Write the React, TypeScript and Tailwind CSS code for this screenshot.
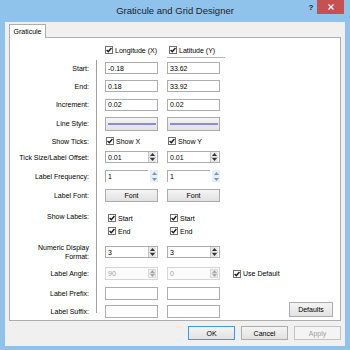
import React from "react";

function CheckMark() {
  return (
    <svg width="6" height="6" viewBox="0 0 6 6">
      <path d="M0.6 3.1 L2.3 4.8 L5.4 1" stroke="#1a1a1a" strokeWidth="1.4" fill="none" />
    </svg>
  );
}

function Check({ label }: { label: string }) {
  return (
    <div className="flex items-center gap-[2px] leading-none">
      <div className="flex h-[8px] w-[8px] items-center justify-center border border-[#707070] bg-white">
        <CheckMark />
      </div>
      <span>{label}</span>
    </div>
  );
}

function TextBox({ value = "", tall = false }: { value?: string; tall?: boolean }) {
  return (
    <div
      className={
        tall
          ? "flex h-[13px] w-[53px] items-center border border-[#abadb3] bg-white pl-[2px] leading-none"
          : "flex h-[12px] w-[53px] items-center border border-[#abadb3] bg-white pl-[2px] leading-none"
      }
    >
      {value}
    </div>
  );
}

function Tri({ up, color }: { up: boolean; color: string }) {
  return (
    <svg width="5" height="3" viewBox="0 0 5 3">
      <path d={up ? "M0 3 L2.5 0 L5 3Z" : "M0 0 L2.5 3 L5 0Z"} fill={color} />
    </svg>
  );
}

function Spin({ value, variant = "normal" }: { value: string; variant?: "normal" | "blue" | "disabled" }) {
  if (variant === "disabled") {
    return (
      <div className="flex h-[13px] w-[53px] border border-[#d6d6d6] bg-[#fbfbfb]">
        <div className="flex flex-1 items-center pl-[2px] leading-none text-[#a3a3a3]">{value}</div>
        <div className="my-px mr-px flex w-[8px] flex-col border border-[#dadada] bg-[#efefef]">
          <div className="flex flex-1 items-center justify-center border-b border-[#dadada]">
            <Tri up color="#a8a8a8" />
          </div>
          <div className="flex flex-1 items-center justify-center">
            <Tri up={false} color="#a8a8a8" />
          </div>
        </div>
      </div>
    );
  }
  if (variant === "blue") {
    return (
      <div className="flex h-[12px] w-[53px]">
        <div className="flex flex-1 items-center border-l border-t border-[#abadb3] bg-white pl-[2px] leading-none">
          {value}
        </div>
        <div className="ml-[2px] flex w-[8px] flex-col bg-[#e6eef8]">
          <div className="flex flex-1 items-center justify-center">
            <Tri up color="#7d97b8" />
          </div>
          <div className="flex flex-1 items-center justify-center">
            <Tri up={false} color="#7d97b8" />
          </div>
        </div>
      </div>
    );
  }
  return (
    <div className="flex h-[12px] w-[53px] border border-[#abadb3] bg-white">
      <div className="flex flex-1 items-center pl-[2px] leading-none">{value}</div>
      <div className="mr-px flex w-[8px] flex-col border-l border-[#c4c4c4] bg-[#e8e8e8]">
        <div className="flex flex-1 items-center justify-center border-b border-[#c4c4c4]">
          <Tri up color="#333333" />
        </div>
        <div className="flex flex-1 items-center justify-center">
          <Tri up={false} color="#333333" />
        </div>
      </div>
    </div>
  );
}

function LineBtn() {
  return (
    <div className="flex h-[14px] w-[53px] items-center justify-center border border-[#acacac] bg-linear-to-b from-[#f4f4f4] to-[#e2e2e2]">
      <div className="h-[2px] w-[48px] bg-[#8d88e6]" />
    </div>
  );
}

function FontBtn() {
  return (
    <div className="flex h-[13px] w-[53px] items-center justify-center border border-[#acacac] bg-linear-to-b from-[#f4f4f4] to-[#e2e2e2] leading-none">
      Font
    </div>
  );
}

function Label({ text }: { text: string }) {
  return <div className="flex items-center justify-end pr-[3px] leading-none">{text}</div>;
}

function Cell({ children }: { children?: React.ReactNode }) {
  return <div className="flex items-center">{children}</div>;
}

export default function App() {
  return (
    <div className="flex h-[350px] w-[350px] flex-col bg-[#8fc3ec] font-['Liberation_Sans',Arial,sans-serif] text-[7px] text-black">
      {/* Title bar */}
      <div className="relative flex h-[22px] items-center justify-center">
        <span className="text-[9.5px] leading-none text-[#1e1e1e]">Graticule and Grid Designer</span>
        <div className="absolute right-[6px] top-0 flex items-start">
          <div className="mr-px mt-[4px] w-[10px] text-center text-[8px] font-bold leading-none text-[#222]">?</div>
          <div className="flex h-[14px] w-[27px] items-center justify-center bg-[#c75050]">
            <svg width="6" height="6" viewBox="0 0 6 6">
              <path d="M0.5 0.5 L5.5 5.5 M5.5 0.5 L0.5 5.5" stroke="#ffffff" strokeWidth="1.3" />
            </svg>
          </div>
        </div>
      </div>

      {/* Client area */}
      <div className="mx-[5px] flex h-[324px] flex-col bg-[#f0f0f0]">
        <div className="pl-[4px] pt-[2px]">
          <div className="relative z-10 -mb-px flex h-[14px] w-[37px] items-center justify-center border border-b-0 border-[#adadad] bg-white leading-none">
            Graticule
          </div>
        </div>

        <div className="ml-[4px] flex h-[284px] w-[332px] flex-col border border-[#adadad] bg-white">
          {/* Header */}
          <div className="flex h-[21px] items-start pl-[95px] pt-[8px]">
            <div className="w-[62px]">
              <Check label="Longitude (X)" />
            </div>
            <div className="h-[12px] w-[58px] border-b border-[#b5b5b5] pl-[2px]">
              <Check label="Latitude (Y)" />
            </div>
          </div>

          {/* Rows */}
          <div className="grid grid-cols-[82px_13px_62px_53px_1fr] grid-rows-[18px_18px_19px_19px_16px_16px_22px_16px_38px_22px_21px_18px_18px]">
            <div className="col-start-2 row-start-1 row-end-14 mb-[7px] ml-[4px] mt-px border-l border-[#a0a0a0]" />

            <Label text="Start:" />
            <Cell><TextBox value="-0.18" /></Cell>
            <Cell><TextBox value="33.62" /></Cell>
            <Cell />

            <Label text="End:" />
            <Cell><TextBox value="0.18" /></Cell>
            <Cell><TextBox value="33.92" /></Cell>
            <Cell />

            <Label text="Increment:" />
            <Cell><TextBox value="0.02" /></Cell>
            <Cell><TextBox value="0.02" /></Cell>
            <Cell />

            <Label text="Line Style:" />
            <Cell><LineBtn /></Cell>
            <Cell><LineBtn /></Cell>
            <Cell />

            <Label text="Show Ticks:" />
            <div className="flex items-center pl-px"><Check label="Show X" /></div>
            <div className="flex items-center pl-px"><Check label="Show Y" /></div>
            <Cell />

            <Label text="Tick Size/Label Offset:" />
            <Cell><Spin value="0.01" /></Cell>
            <Cell><Spin value="0.01" /></Cell>
            <Cell />

            <Label text="Label Frequency:" />
            <Cell><Spin value="1" variant="blue" /></Cell>
            <Cell><Spin value="1" variant="blue" /></Cell>
            <Cell />

            <Label text="Label Font:" />
            <Cell><FontBtn /></Cell>
            <Cell><FontBtn /></Cell>
            <Cell />

            <div className="flex items-start justify-end pr-[3px] pt-[10px] leading-none">Show Labels:</div>
            <div className="flex flex-col items-start gap-[5px] pl-[3px] pt-[11px]">
              <Check label="Start" />
              <Check label="End" />
            </div>
            <div className="flex flex-col items-start gap-[5px] pl-[3px] pt-[11px]">
              <Check label="Start" />
              <Check label="End" />
            </div>
            <Cell />

            <div className="flex flex-col items-end justify-center pr-[3px] text-right leading-[9px]">
              <span>Numeric Display</span>
              <span>Format:</span>
            </div>
            <Cell><Spin value="3" /></Cell>
            <Cell><Spin value="3" /></Cell>
            <Cell />

            <Label text="Label Angle:" />
            <Cell><Spin value="90" variant="disabled" /></Cell>
            <Cell><Spin value="0" variant="disabled" /></Cell>
            <div className="flex items-center pl-[13px]"><Check label="Use Default" /></div>

            <Label text="Label Prefix:" />
            <Cell><TextBox tall /></Cell>
            <Cell><TextBox tall /></Cell>
            <Cell />

            <Label text="Label Suffix:" />
            <Cell><TextBox tall /></Cell>
            <Cell><TextBox tall /></Cell>
            <div className="flex items-start justify-end pr-[7px]">
              <div className="flex h-[15px] w-[44px] items-center justify-center border border-[#acacac] bg-linear-to-b from-[#f4f4f4] to-[#e2e2e2] leading-none">
                Defaults
              </div>
            </div>
          </div>
        </div>

        {/* Dialog buttons */}
        <div className="mt-[5px] flex justify-end gap-[6px] pr-[4px]">
          <div className="flex h-[14px] w-[47px] items-center justify-center border border-[#3c99e6] bg-linear-to-b from-[#f4f4f4] to-[#e2e2e2] leading-none">
            OK
          </div>
          <div className="flex h-[14px] w-[47px] items-center justify-center border border-[#acacac] bg-linear-to-b from-[#f4f4f4] to-[#e2e2e2] leading-none">
            Cancel
          </div>
          <div className="flex h-[14px] w-[47px] items-center justify-center border border-[#c4c4c4] bg-[#f4f4f4] leading-none text-[#a0a0a0]">
            Apply
          </div>
        </div>
      </div>
    </div>
  );
}
